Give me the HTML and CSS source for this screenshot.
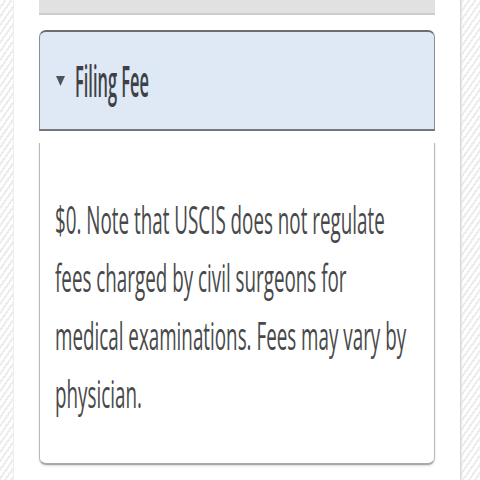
FILE: index.html
```html
<!DOCTYPE html>
<html lang="en">
<head>
<meta charset="utf-8">
<link rel="stylesheet" href="styles.css">
</head>
<body>
<div class="page">
  <div class="prev-box"></div>
  <section class="accordion">
    <div class="acc-header">
      <svg class="caret" width="9" height="11" viewBox="0 0 9 11"><polygon points="0,1 9,1 4.5,11" fill="#505459"/></svg>
      <div class="squeeze-wrap"><h2 class="acc-title">Filing Fee</h2></div>
    </div>
    <div class="acc-body">
      <p class="acc-text">$0. Note that USCIS does not regulate fees charged by civil surgeons for medical examinations. Fees may vary by physician.</p>
    </div>
  </section>
</div>
</body>
</html>
```
FILE: styles.css
```css
html, body {
  margin: 0;
  padding: 0;
  height: 480px;
  overflow: hidden;
}
body {
  background: repeating-linear-gradient(-55deg, #ffffff 0px, #ffffff 3px, #ececec 3px, #ececec 5px);
  font-family: "Open Sans", "Noto Sans", sans-serif;
}
.page {
  margin-left: 14px;
  width: 446px;
  height: 480px;
  box-sizing: border-box;
  background: #ffffff;
  padding: 0 25px;
  box-shadow: 1px 0 0 #d6d6d6, 2px 0 2px #e6e6e6, -1px 0 1px #eeeeee;
  overflow: hidden;
}
.prev-box {
  height: 13px;
  background: #e1e1e1;
  border-bottom: 2px solid #cdcdcd;
}
.accordion {
  margin-top: 15px;
}
.acc-header {
  display: flex;
  align-items: center;
  height: 101px;
  box-sizing: border-box;
  background: #dfe9f5;
  border-top: 2px solid #6a6d72;
  border-left: 1px solid #8a8d92;
  border-right: 1px solid #8a8d92;
  border-bottom: 2px solid #74777c;
  border-radius: 7px 7px 0 0;
  padding: 0 0 0 16px;
  overflow: hidden;
}
.caret {
  flex: none;
  margin-top: 0px;
}
.squeeze-wrap {
  margin-left: 10px;
  width: 300px;
  height: 62px;
}
.acc-title {
  margin: 0;
  font-size: 43px;
  line-height: 62px;
  font-weight: 600;
  color: #3d4147;
  width: 700px;
  transform: scaleX(0.382);
  transform-origin: 0 0;
  white-space: nowrap;
}
.acc-body {
  margin-top: 12px;
  height: 322px;
  box-sizing: border-box;
  border: 1px solid #b9b9b9;
  border-top: none;
  border-bottom: 2px solid #a9a9a9;
  border-radius: 0 0 7px 7px;
  box-shadow: 0 1px 2px rgba(0,0,0,0.15);
  padding: 47px 0 0 15px;
  overflow: hidden;
}
.acc-text {
  margin: 0;
  font-size: 38px;
  line-height: 58px;
  font-weight: 400;
  color: #48494b;
  width: 727px;
  transform: scaleX(0.495);
  transform-origin: 0 0;
}
```
